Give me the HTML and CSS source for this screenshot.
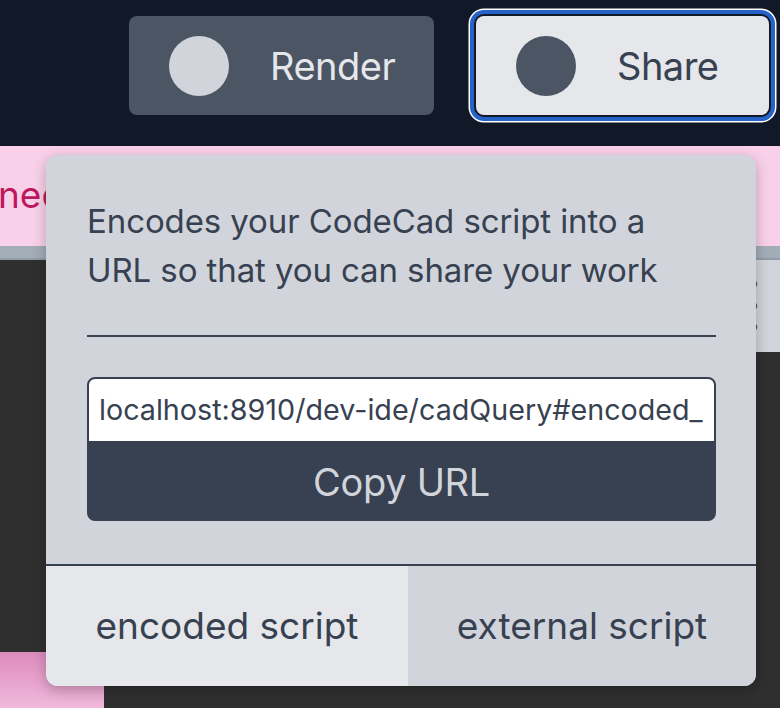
FILE: index.html
```html
<!DOCTYPE html>
<html lang="en">
<head>
<meta charset="utf-8">
<title>Share</title>
<link rel="stylesheet" href="styles.css">
</head>
<body>
  <header class="topbar">
    <button class="tool-btn tool-btn--dark"><span class="dot dot--light"></span><span class="tool-label">Render</span></button>
    <button class="tool-btn tool-btn--light tool-btn--focus"><span class="dot dot--dark"></span><span class="tool-label">Share</span></button>
  </header>
  <div class="notice"><span class="notice-text">need to save</span></div>
  <div class="tabbar"></div>
  <main class="workspace">
    <div class="viewer-left"><div class="blob"></div></div>
    <div class="side-panel">
      <svg class="kebab" width="8" height="56" viewBox="0 0 8 56" aria-hidden="true">
        <circle cx="4" cy="4" r="3.2" fill="#4b5563"/>
        <circle cx="4" cy="26" r="3.2" fill="#4b5563"/>
        <circle cx="4" cy="47" r="3.2" fill="#4b5563"/>
      </svg>
    </div>
  </main>

  <section class="popover">
    <div class="popover-body">
      <p class="popover-desc">Encodes your CodeCad script into a URL so that you can share your work</p>
      <hr class="popover-rule">
      <div class="url-group">
        <div class="url-field">localhost:8910/dev-ide/cadQuery#encoded_</div>
        <button class="copy-btn">Copy URL</button>
      </div>
    </div>
    <div class="popover-tabs">
      <div class="ptab ptab--active">encoded script</div>
      <div class="ptab">external script</div>
    </div>
  </section>
</body>
</html>
```
FILE: styles.css
```css
* { box-sizing: border-box; }
html, body { margin: 0; height: 100%; }
body {
  background: #2f2f2f;
  font-family: "Inter", "Noto Sans", sans-serif;
  overflow: hidden;
  position: relative;
  display: flex;
  flex-direction: column;
}
.topbar {
  height: 146px;
  background: #111827;
  display: flex;
  justify-content: flex-end;
  align-items: flex-start;
  padding: 16px 11px 0 0;
  gap: 42px;
  flex: none;
}
.tool-btn {
  height: 99px;
  border: none;
  border-radius: 8px;
  display: flex;
  align-items: center;
  padding: 0 0 0 40px;
  font-family: inherit;
  font-size: 38px;
  cursor: pointer;
}
.tool-btn--dark { width: 305px; background: #4b5563; color: #e5e7eb; }
.tool-btn--light { width: 293px; background: #e5e7eb; color: #374151; }
.tool-btn--focus {
  box-shadow: 0 0 0 2px #111827, 0 0 0 6px #2563c9, 0 0 0 7.5px #ffffff;
}
.dot { width: 60px; height: 60px; border-radius: 50%; flex: none; }
.dot--light { background: #d1d5db; }
.dot--dark { background: #4b5563; }
.tool-label { margin-left: 41px; letter-spacing: -0.5px; }

.notice {
  height: 100px;
  background: #f9d0e9;
  flex: none;
  display: flex;
  align-items: center;
  overflow: hidden;
}
.notice-text {
  color: #be185d;
  font-size: 37px;
  margin-left: -2px;
  padding-bottom: 4px;
  white-space: nowrap;
}
.tabbar {
  height: 14px;
  background: #a3adb8;
  border-bottom: 2px solid #939ca6;
  flex: none;
}
.workspace {
  flex: 1;
  display: flex;
  justify-content: space-between;
}
.viewer-left { display: flex; align-items: flex-end; }
.blob {
  width: 104px;
  height: 56px;
  background: linear-gradient(180deg, #dd8bbd 0%, #f0b9dc 100%);
  border-top-right-radius: 4px;
}
.side-panel {
  width: 60px;
  height: 92px;
  margin-right: -20px;
  background: #d1d5db;
  border-top-right-radius: 8px;
  padding: 20px 0 0 10px;
}
.kebab { display: block; }

.popover {
  position: absolute;
  top: 155px;
  left: 46px;
  width: 710px;
  height: 531px;
  background: #d1d5db;
  border-radius: 12px;
  overflow: hidden;
  box-shadow: 0 4px 14px rgba(0,0,0,0.25);
  display: flex;
  flex-direction: column;
  color: #374151;
}
.popover-body {
  flex: 1;
  padding: 42px 40px 0 41px;
}
.popover-desc {
  margin: 0;
  max-width: 600px;
  font-size: 33px;
  line-height: 49px;
  letter-spacing: -0.1px;
}
.popover-rule {
  margin: 40px 0 0 0;
  border: none;
  border-top: 2px solid #374151;
  height: 0;
}
.url-group {
  margin-top: 40px;
  border: 2px solid #374151;
  border-radius: 8px;
  overflow: hidden;
  background: #374151;
}
.url-field {
  height: 62px;
  background: #ffffff;
  font-size: 28.7px;
  line-height: 62px;
  padding-left: 10px;
  white-space: nowrap;
  overflow: hidden;
  color: #374151;
}
.copy-btn {
  display: block;
  width: 100%;
  height: 78px;
  border: none;
  background: #374151;
  color: #d1d5db;
  font-family: inherit;
  font-size: 38px;
  letter-spacing: -0.3px;
  padding: 4px 0 0 0;
}
.popover-tabs {
  height: 122px;
  border-top: 2px solid #374151;
  display: flex;
  flex: none;
}
.ptab {
  display: flex;
  align-items: center;
  justify-content: center;
  font-size: 37px;
  padding-bottom: 2px;
  background: #d1d5db;
  flex: 1;
}
.ptab--active { background: #e5e7eb; flex: 0 0 362px; }
```
